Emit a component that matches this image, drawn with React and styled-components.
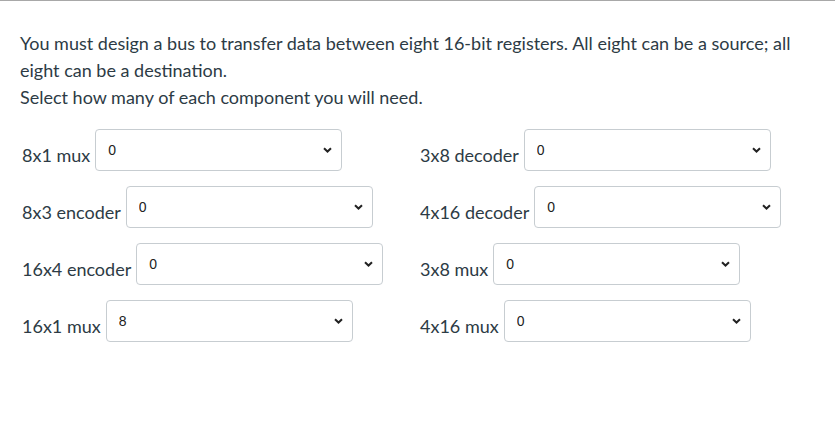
import React from "react";
import styled, { createGlobalStyle } from "styled-components";

const GlobalStyle = createGlobalStyle`
    html, body {
        margin: 0;
        padding: 0;
        background: #fff;
    }
    body {
        font-family: Lato, "Open Sans", sans-serif;
        color: #2d3b45;
    }
`;

const Page = styled.div`
    border-top: 1px solid #a8a8a8;
    padding: 29px 20px 0 20px;
    width: 835px;
    box-sizing: border-box;
`;

const Prompt = styled.p`
    margin: 0;
    font-size: 18px;
    line-height: 27px;
`;

const Grid = styled.div`
    display: grid;
    grid-template-columns: 398px 398px;
    grid-auto-rows: 57px;
    margin-top: 18px;
`;

const Field = styled.label`
    display: flex;
    align-items: flex-start;
    gap: 5px;
`;

const LabelText = styled.span`
    font-size: 18px;
    line-height: 22px;
    padding-top: 15px;
    padding-left: 2px;
    white-space: nowrap;
`;

const SelectWrap = styled.div`
    position: relative;
    width: 247px;
    height: 42px;
`;

const Select = styled.select`
    appearance: none;
    -webkit-appearance: none;
    width: 100%;
    height: 100%;
    box-sizing: border-box;
    border: 1px solid #c7cdd1;
    border-radius: 4px;
    background: #fff;
    padding: 10px 12px 10px 12px;
    font-family: "Liberation Sans", Arial, sans-serif;
    font-size: 14px;
    color: #222;
    outline: none;
`;

const Chevron = styled.svg`
    position: absolute;
    right: 10px;
    top: 18px;
    pointer-events: none;
`;

const fields = [
    ["8x1 mux", "0"],
    ["3x8 decoder", "0"],
    ["8x3 encoder", "0"],
    ["4x16 decoder", "0"],
    ["16x4 encoder", "0"],
    ["3x8 mux", "0"],
    ["16x1 mux", "8"],
    ["4x16 mux", "0"],
];

const options = ["0", "1", "2", "4", "8", "16"];

function Dropdown({ value }) {
    return (
        <SelectWrap>
            <Select defaultValue={value}>
                {options.map((o) => (
                    <option key={o} value={o}>{o}</option>
                ))}
            </Select>
            <Chevron width="9" height="6" viewBox="0 0 9 6">
                <path d="M1 1.3 L4.5 4.6 L8 1.3" fill="none" stroke="#222" strokeWidth="2" />
            </Chevron>
        </SelectWrap>
    );
}

export default function App() {
    return (
        <Page>
            <GlobalStyle />
            <Prompt>
                You must design a bus to transfer data between eight 16-bit registers. All eight can be a source; all
                eight can be a destination.
                <br />
                Select how many of each component you will need.
            </Prompt>
            <Grid>
                {fields.map(([label, value]) => (
                    <Field key={label}>
                        <LabelText>{label}</LabelText>
                        <Dropdown value={value} />
                    </Field>
                ))}
            </Grid>
        </Page>
    );
}
